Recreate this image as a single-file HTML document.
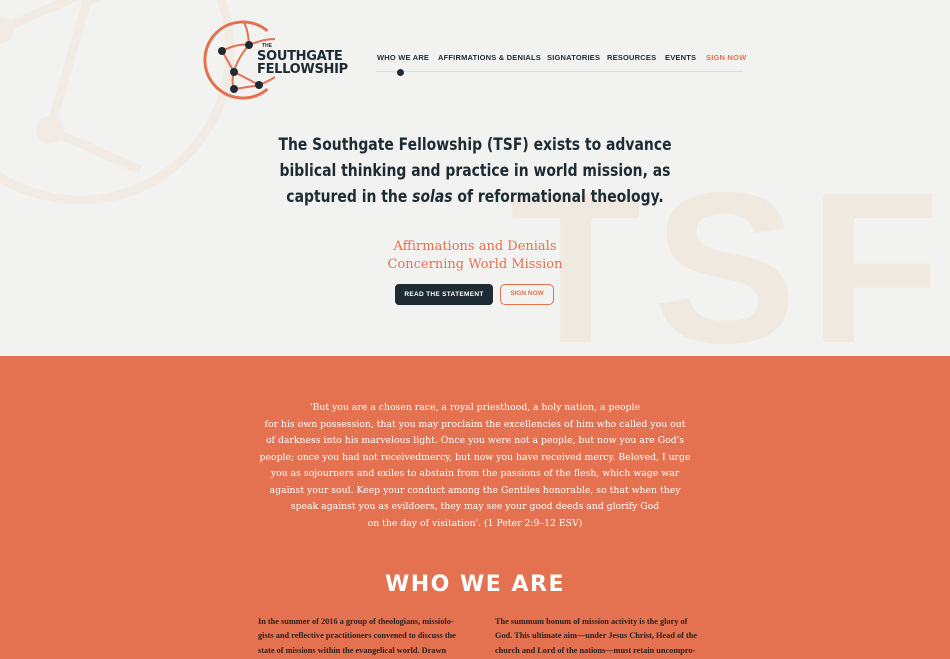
<!DOCTYPE html>
<html><head><meta charset="utf-8"><style>
*{margin:0;padding:0;box-sizing:border-box}
body{width:950px;height:659px;overflow:hidden;background:#f2f2f2;font-family:"Liberation Sans",sans-serif;position:relative}
.top{position:absolute;left:0;top:0;width:950px;height:356px;background:#f2f2f1;overflow:hidden}
.wm{position:absolute;left:510px;top:160px;font:bold 215px/1 "Liberation Sans",sans-serif;color:#f0e9df;letter-spacing:12px}
.nav{position:absolute;top:53px;font:bold 7.5px "Liberation Sans",sans-serif;color:#1d2b33;letter-spacing:.2px}
.line{position:absolute;left:376px;top:71px;width:367px;height:1px;background:#dcdcdc}
h1{position:absolute;left:175px;width:600px;top:132px;text-align:center;font:bold 17px/26px "DejaVu Sans",sans-serif;color:#1d2b33;white-space:nowrap;transform:scaleX(.82)}
.sub{position:absolute;left:300px;width:350px;top:238px;text-align:center;color:#e4714f;font:13px/18px "DejaVu Serif",serif}
.b1{position:absolute;left:395px;top:284px;width:98px;height:21px;background:#1d2b33;color:#fff;border-radius:4px;font:bold 6.5px/21px "Liberation Sans",sans-serif;text-align:center;letter-spacing:.3px}
.b2{position:absolute;left:500px;top:284px;width:54px;height:21px;border:1.5px solid #e4714f;color:#e4714f;border-radius:5px;font:bold 6.5px/18px "Liberation Sans",sans-serif;text-align:center}
.or{position:absolute;left:0;top:356px;width:950px;height:303px;background:#e4714f}
.q{position:absolute;left:175px;width:600px;top:44px;text-align:center;color:#fff;font:9.3px/16.5px "DejaVu Serif",serif;white-space:nowrap;transform:scaleX(1.0)}
h2{position:absolute;left:0;width:950px;top:216px;text-align:center;color:#fff;font:bold 22px "DejaVu Sans",sans-serif;letter-spacing:1.5px}
.c{position:absolute;top:259px;width:200px;color:#2a2220;font:bold 8.3px/14.3px "Liberation Serif",serif;white-space:nowrap}
</style></head><body>
<div class="top">
<svg style="position:absolute;left:-60px;top:-70px" width="320" height="300"><g stroke="#f1ebe4" stroke-width="9" fill="none"><circle cx="140" cy="120" r="150"/><path d="M60 100 L150 60 L110 200 L200 240"/></g><g fill="#f1ebe4"><circle cx="150" cy="60" r="14"/><circle cx="60" cy="100" r="14"/><circle cx="110" cy="200" r="14"/></g></svg>
<div class="wm">TSF</div>
<svg style="position:absolute;left:203px;top:19px" width="90" height="85" viewBox="0 0 90 85">
<path d="M64.4 11.9 A38 38 0 1 0 64.4 70.1" stroke="#e4714f" stroke-width="3" fill="none"/>
<g stroke="#e4714f" stroke-width="2" fill="none"><path d="M19 32 Q35 24 46 26 Q60 20 72 20"/><path d="M46 26 Q34 40 31 53 Q45 60 56 66"/><path d="M19 32 Q26 44 31 53 Q28 62 31 70"/><path d="M31 70 Q45 68 56 66 Q66 62 72 58"/><path d="M46 26 Q45 10 41 4"/></g>
<g fill="#1d2b33"><circle cx="19" cy="32" r="4"/><circle cx="46" cy="26" r="4"/><circle cx="31" cy="53" r="4"/><circle cx="31" cy="70" r="4"/><circle cx="56" cy="66" r="4"/></g></svg>
<div style="position:absolute;left:262px;top:43px;font:bold 5px sans-serif;color:#1d2b33">THE</div>
<div style="position:absolute;left:257px;top:50px;font:bold 13px/13px 'DejaVu Sans',sans-serif;color:#1d2b33;letter-spacing:-.3px">SOUTHGATE<br>FELLOWSHIP</div>
<div class="nav" style="left:377px">WHO WE ARE</div>
<div class="nav" style="left:438px">AFFIRMATIONS &amp; DENIALS</div>
<div class="nav" style="left:547px">SIGNATORIES</div>
<div class="nav" style="left:607px">RESOURCES</div>
<div class="nav" style="left:665px">EVENTS</div>
<div class="nav" style="left:706px;color:#e4714f">SIGN NOW</div>
<div class="line"></div>
<div style="position:absolute;left:397px;top:69px;width:7px;height:7px;border-radius:50%;background:#1d2b33"></div>
<h1>The Southgate Fellowship (TSF) exists to advance<br>biblical thinking and practice in world mission, as<br>captured in the <i>solas</i> of reformational theology.</h1>
<div class="sub">Affirmations and Denials<br>Concerning World Mission</div>
<div class="b1">READ THE STATEMENT</div>
<div class="b2">SIGN NOW</div>
</div>
<div class="or">
<div class="q">'But you are a chosen race, a royal priesthood, a holy nation, a people<br>for his own possession, that you may proclaim the excellencies of him who called you out<br>of darkness into his marvelous light. Once you were not a people, but now you are God's<br>people; once you had not receivedmercy, but now you have received mercy. Beloved, I urge<br>you as sojourners and exiles to abstain from the passions of the flesh, which wage war<br>against your soul. Keep your conduct among the Gentiles honorable, so that when they<br>speak against you as evildoers, they may see your good deeds and glorify God<br>on the day of visitation'. (1 Peter 2:9–12 ESV)</div>
<h2>WHO WE ARE</h2>
<div class="c" style="left:258px">In the summer of 2016 a group of theologians, missiolo-<br>gists and reflective practitioners convened to discuss the<br>state of missions within the evangelical world. Drawn</div>
<div class="c" style="left:495px">The summum bonum of mission activity is the glory of<br>God. This ultimate aim—under Jesus Christ, Head of the<br>church and Lord of the nations—must retain uncompro-</div>
</div>
</body></html>
